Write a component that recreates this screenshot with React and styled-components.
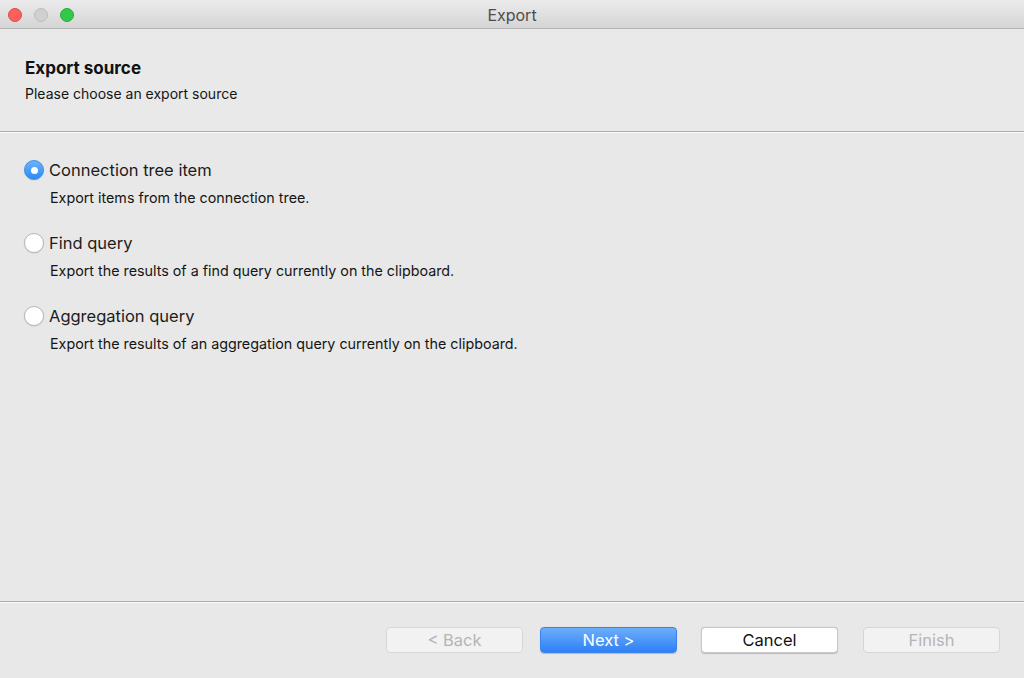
import React, { useState } from 'react';
import styled, { createGlobalStyle, css } from 'styled-components';

const GlobalStyle = createGlobalStyle`
  html, body {
    margin: 0;
    padding: 0;
    background: #e8e8e8;
  }
  body {
    font-family: Inter, "Liberation Sans", Arial, sans-serif;
    color: #1a1a1a;
  }
`;

const Window = styled.div`
  width: 1024px;
  height: 678px;
  display: flex;
  flex-direction: column;
  background: #e8e8e8;
  overflow: hidden;
`;

const TitleBar = styled.div`
  height: 29px;
  flex-shrink: 0;
  display: flex;
  align-items: center;
  position: relative;
  background: linear-gradient(#ebebeb, #d5d5d5);
  border-bottom: 1px solid #b4b4b4;
  box-sizing: border-box;
`;

const Lights = styled.div`
  display: flex;
  gap: 12px;
  padding-left: 8px;
  margin-top: 1px;
`;

const Light = styled.span`
  width: 14px;
  height: 14px;
  box-sizing: border-box;
  border-radius: 50%;
  background: ${(p) => p.color};
  border: 0.5px solid ${(p) => p.edge};
`;

const Title = styled.div`
  position: absolute;
  left: 0;
  right: 0;
  top: 5px;
  text-align: center;
  font-size: 16px;
  color: #4d4d4d;
  pointer-events: none;
`;

const Header = styled.div`
  height: 102px;
  flex-shrink: 0;
  box-sizing: border-box;
  padding: 29px 0 0 25px;
  background: #e9e9e9;
`;

const Heading = styled.div`
  font-size: 17px;
  font-weight: 700;
  color: #111;
`;

const SubHeading = styled.div`
  margin-top: 7px;
  font-size: 14px;
  color: #151515;
`;

const Separator = styled.div`
  height: 1px;
  flex-shrink: 0;
  background: #a9a9a9;
  border-bottom: 1px solid #fbfbfb;
`;

const Content = styled.div`
  flex: 1;
  padding: 26px 0 0 24px;
  display: flex;
  flex-direction: column;
  gap: 26px;
`;

const Option = styled.label`
  display: flex;
  flex-direction: column;
  cursor: default;
`;

const OptionRow = styled.div`
  display: flex;
  align-items: center;
  gap: 5px;
  height: 22px;
`;

const Radio = styled.span`
  width: 20px;
  height: 20px;
  border-radius: 50%;
  box-sizing: border-box;
  display: flex;
  align-items: center;
  justify-content: center;
  background: #fff;
  border: 1px solid #b9b9b9;
  box-shadow: 0 0.5px 1px rgba(0, 0, 0, 0.15);
  ${(p) =>
    p.checked &&
    css`
      background: linear-gradient(#6cb3fa, #2e89f4);
      border-color: #3c8ff0;
      &::after {
        content: '';
        width: 7px;
        height: 7px;
        border-radius: 50%;
        background: #fff;
      }
    `}
`;

const OptionLabel = styled.span`
  font-size: 16.5px;
  color: #1c1c1c;
`;

const OptionDesc = styled.div`
  margin: 8px 0 0 26px;
  font-size: 14.3px;
  color: #151515;
`;

const Footer = styled.div`
  height: 75px;
  flex-shrink: 0;
  display: flex;
  justify-content: flex-end;
  align-items: flex-start;
  padding: 24px 24px 0 0;
  box-sizing: border-box;
`;

const Button = styled.button`
  width: 137px;
  height: 26px;
  margin-left: ${(p) => p.gap}px;
  border-radius: 4px;
  font-family: inherit;
  font-size: 16.5px;
  box-sizing: border-box;
  border: 1px solid #c8c8c8;
  background: #fff;
  color: #111;
  box-shadow: 0 0.5px 1px rgba(0, 0, 0, 0.2);
  ${(p) =>
    p.disabled &&
    css`
      background: #f2f2f2;
      color: #b5b5b5;
      border-color: #d6d6d6;
      box-shadow: none;
    `}
  ${(p) =>
    p.primary &&
    css`
      background: linear-gradient(#6daefa, #2f80f6);
      border-color: #3a82ec;
      color: #fff;
    `}
`;

const options = [
  { id: 'tree', label: 'Connection tree item', desc: 'Export items from the connection tree.' },
  { id: 'find', label: 'Find query', desc: 'Export the results of a find query currently on the clipboard.' },
  {
    id: 'agg',
    label: 'Aggregation query',
    desc: 'Export the results of an aggregation query currently on the clipboard.',
  },
];

export default function App() {
  const [source, setSource] = useState('tree');
  return (
    <Window>
      <GlobalStyle />
      <TitleBar>
        <Lights>
          <Light color="#fc605c" edge="#de4c48" />
          <Light color="#d0d0d0" edge="#bdbdbd" />
          <Light color="#34c84a" edge="#2aa93c" />
        </Lights>
        <Title>Export</Title>
      </TitleBar>
      <Header>
        <Heading>Export source</Heading>
        <SubHeading>Please choose an export source</SubHeading>
      </Header>
      <Separator />
      <Content>
        {options.map((o) => (
          <Option key={o.id} onClick={() => setSource(o.id)}>
            <OptionRow>
              <Radio checked={source === o.id} />
              <OptionLabel>{o.label}</OptionLabel>
            </OptionRow>
            <OptionDesc>{o.desc}</OptionDesc>
          </Option>
        ))}
      </Content>
      <Separator />
      <Footer>
        <Button disabled gap={0}>&lt; Back</Button>
        <Button primary gap={17}>Next &gt;</Button>
        <Button gap={24}>Cancel</Button>
        <Button disabled gap={25}>Finish</Button>
      </Footer>
    </Window>
  );
}
